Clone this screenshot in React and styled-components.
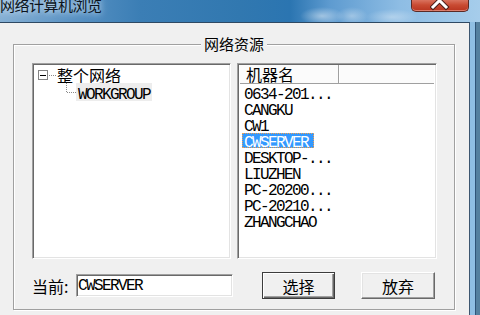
import React from "react";
import styled, { createGlobalStyle } from "styled-components";

const Global = createGlobalStyle`
  html, body { margin: 0; padding: 0; }
  body {
    width: 480px; height: 315px; overflow: hidden;
    font-family: "Noto Sans CJK SC", "DejaVu Sans", sans-serif;
    color: #000;
  }
`;

const Frame = styled.div`
  width: 480px;
  height: 315px;
  overflow: hidden;
  display: grid;
  grid-template-columns: 470px 10px;
  grid-template-rows: 22px 1fr;
  background:
    radial-gradient(ellipse 22px 9px at 322px 16px, rgba(255,255,255,0.45), rgba(255,255,255,0) 100%),
    radial-gradient(ellipse 16px 9px at 352px 16px, rgba(255,255,255,0.35), rgba(255,255,255,0) 100%),
    radial-gradient(ellipse 26px 8px at 392px 17px, rgba(255,255,255,0.35), rgba(255,255,255,0) 100%),
    linear-gradient(90deg, #86b0d4 0px, #5a93c4 70px, #3b7eb5 140px, #3178b0 240px, #2b75b1 290px, #5e9bd0 330px, #8ebde4 400px, #a6cdeb 480px);
`;

const TitleBar = styled.div`
  grid-column: 1 / -1;
  display: flex;
  align-items: flex-start;
  overflow: hidden;
`;

const TitleText = styled.div`
  font-size: 15px;
  line-height: 18px;
  margin-top: -4px;
  color: #0c1420;
  text-shadow: 0 0 6px rgba(220,235,250,0.9), 0 0 10px rgba(220,235,250,0.6);
  letter-spacing: -0.5px;
`;

const CloseButton = styled.div`
  margin-left: auto;
  margin-right: 11px;
  width: 58px;
  height: 12px;
  box-sizing: border-box;
  border: 1px solid #5b2a25;
  border-top: none;
  border-radius: 0 0 5px 5px;
  background: linear-gradient(180deg, #d9735f 0%, #c94b33 45%, #b8341f 100%);
  box-shadow: inset 0 -1px 0 rgba(255,200,190,0.5);
  display: flex;
  justify-content: center;
`;

const RightEdge = styled.div`
  background:
    linear-gradient(90deg, #8fbfe4 0 5px, #2f5478 5px 6px, #54809f 6px 100%);
`;

const Client = styled.div`
  background: #f0f0f0;
  border-top: 1px solid #2e4963;
  border-right: 1px solid #3d5670;
  padding: 21px 0 0 13px;
`;

const Group = styled.div`
  position: relative;
  box-sizing: border-box;
  width: 442px;
  height: 266px;
  border: 1px solid #a0a0a0;
  box-shadow: inset 1px 1px 0 #fff, 1px 1px 0 #fff;
  padding: 18px 17px 10px 18px;
  display: flex;
  flex-direction: column;
`;

const Legend = styled.span`
  position: absolute;
  top: -10px;
  left: 50%;
  transform: translateX(-50%);
  padding: 0 3px;
  background: #f0f0f0;
  font-size: 15px;
  line-height: 18px;
  white-space: nowrap;
`;

const Panels = styled.div`
  display: flex;
  gap: 6px;
  height: 196px;
`;

const Sunken = styled.div`
  box-sizing: border-box;
  background: #fff;
  border: 1px solid;
  border-color: #a0a0a0 #fff #fff #a0a0a0;
  box-shadow: inset 1px 1px 0 #696969, inset -1px -1px 0 #e3e3e3;
`;

const Tree = styled(Sunken)`
  width: 199px;
  padding: 3px 0 0 5px;
`;

const TreeRow = styled.div`
  display: flex;
  align-items: center;
  height: ${(p) => p.$h}px;
  padding-left: ${(p) => p.$indent}px;
  font-size: 16px;
  line-height: 16px;
  white-space: nowrap;
`;

const TreeLabel = styled.span`
  display: inline-block;
  height: 18px;
  line-height: 18px;
  padding: 0 2px;
  background: ${(p) => (p.$hot ? "#ededed" : "transparent")};
`;

const Mono = styled.span`
  font-family: "Liberation Mono", "DejaVu Sans Mono", monospace;
  font-size: 16px;
  letter-spacing: -1.6px;
`;

const List = styled(Sunken)`
  width: 200px;
  padding: 1px 2px 2px 2px;
  display: flex;
  flex-direction: column;
`;

const Header = styled.div`
  display: flex;
  height: 19px;
  box-sizing: border-box;
  background: #fbfbfb;
  border-bottom: 1px solid #a0a0a0;
`;

const HeaderCell = styled.div`
  width: ${(p) => (p.$w ? `${p.$w}px` : "auto")};
  flex: ${(p) => (p.$w ? "none" : "1")};
  box-sizing: border-box;
  padding-left: 6px;
  font-size: 16px;
  line-height: 18px;
  border-right: ${(p) => (p.$w ? "1px solid #a0a0a0" : "none")};
  box-shadow: ${(p) => (p.$w ? "1px 0 0 #fff" : "none")};
`;

const Row = styled.div`
  height: 16px;
  display: flex;
  align-items: center;
  padding-left: 2px;
`;

const RowName = styled.span`
  display: inline-block;
  box-sizing: border-box;
  height: 15px;
  line-height: 14px;
  padding: 0 6px 0 2px;
  white-space: nowrap;
  color: ${(p) => (p.$sel ? "#fff" : "#000")};
  background: ${(p) => (p.$sel ? "#3399ff" : "transparent")};
  outline: ${(p) => (p.$sel ? "1px dotted #f0a050" : "none")};
  outline-offset: -1px;
`;

const Bottom = styled.div`
  display: flex;
  align-items: center;
  height: 27px;
  margin-top: 13px;
`;

const Label = styled.span`
  width: 44px;
  font-size: 16px;
  line-height: 20px;
  white-space: nowrap;
`;

const Field = styled(Sunken)`
  width: 157px;
  height: 23px;
  padding-left: 1px;
  display: flex;
  align-items: center;
`;

const Button = styled.div`
  box-sizing: border-box;
  width: ${(p) => p.$w}px;
  height: 27px;
  margin-left: ${(p) => p.$ml}px;
  display: flex;
  align-items: center;
  justify-content: center;
  font-size: 16px;
  background: #f0f0f0;
  border: 1px solid;
  border-color: ${(p) => (p.$default ? "#3c3c3c" : "#fff #696969 #696969 #fff")};
  box-shadow: ${(p) =>
    p.$default
      ? "inset 1px 1px 0 #fff, inset -1px -1px 0 #696969, inset -2px -2px 0 #a0a0a0"
      : "inset -1px -1px 0 #a0a0a0, inset 1px 1px 0 #e3e3e3"};
`;

const machines = [
  "0634-201...",
  "CANGKU",
  "CW1",
  "CWSERVER",
  "DESKTOP-...",
  "LIUZHEN",
  "PC-20200...",
  "PC-20210...",
  "ZHANGCHAO",
];

export default function App() {
  return (
    <>
      <Global />
      <Frame>
        <TitleBar>
          <TitleText>网络计算机浏览</TitleText>
          <CloseButton>
            <svg width="20" height="11" viewBox="0 0 20 11">
              <path d="M3 -6 L16 7 M16 -6 L3 7" stroke="#4a1d18" strokeWidth="5" strokeLinecap="square" fill="none" />
              <path d="M3 -6 L16 7 M16 -6 L3 7" stroke="#ffffff" strokeWidth="3" strokeLinecap="square" fill="none" />
            </svg>
          </CloseButton>
        </TitleBar>
        <Client>
          <Group>
            <Legend>网络资源</Legend>
            <Panels>
              <Tree>
                <TreeRow $h={16} $indent={0}>
                  <svg width="19" height="16" viewBox="0 0 19 16">
                    <rect x="0.5" y="3.5" width="9" height="9" fill="#fff" stroke="#848484" />
                    <path d="M2 8.5 H8" stroke="#000" />
                    <path d="M11 8.5 H18" stroke="#8a8a8a" strokeDasharray="1 1" />
                  </svg>
                  <span>整个网络</span>
                </TreeRow>
                <TreeRow $h={18} $indent={27}>
                  <svg width="11" height="18" viewBox="0 0 11 18">
                    <path d="M1.5 0 V9.5 H11" stroke="#8a8a8a" strokeDasharray="1 1" fill="none" />
                  </svg>
                  <TreeLabel $hot>
                    <Mono>WORKGROUP</Mono>
                  </TreeLabel>
                </TreeRow>
              </Tree>
              <List>
                <Header>
                  <HeaderCell $w={99}>机器名</HeaderCell>
                  <HeaderCell />
                </Header>
                {machines.map((m) => (
                  <Row key={m}>
                    <RowName $sel={m === "CWSERVER"}>
                      <Mono>{m}</Mono>
                    </RowName>
                  </Row>
                ))}
              </List>
            </Panels>
            <Bottom>
              <Label>当前:</Label>
              <Field>
                <Mono>CWSERVER</Mono>
              </Field>
              <Button $w={73} $ml={29} $default>选择</Button>
              <Button $w={74} $ml={26}>放弃</Button>
            </Bottom>
          </Group>
        </Client>
        <RightEdge />
      </Frame>
    </>
  );
}
